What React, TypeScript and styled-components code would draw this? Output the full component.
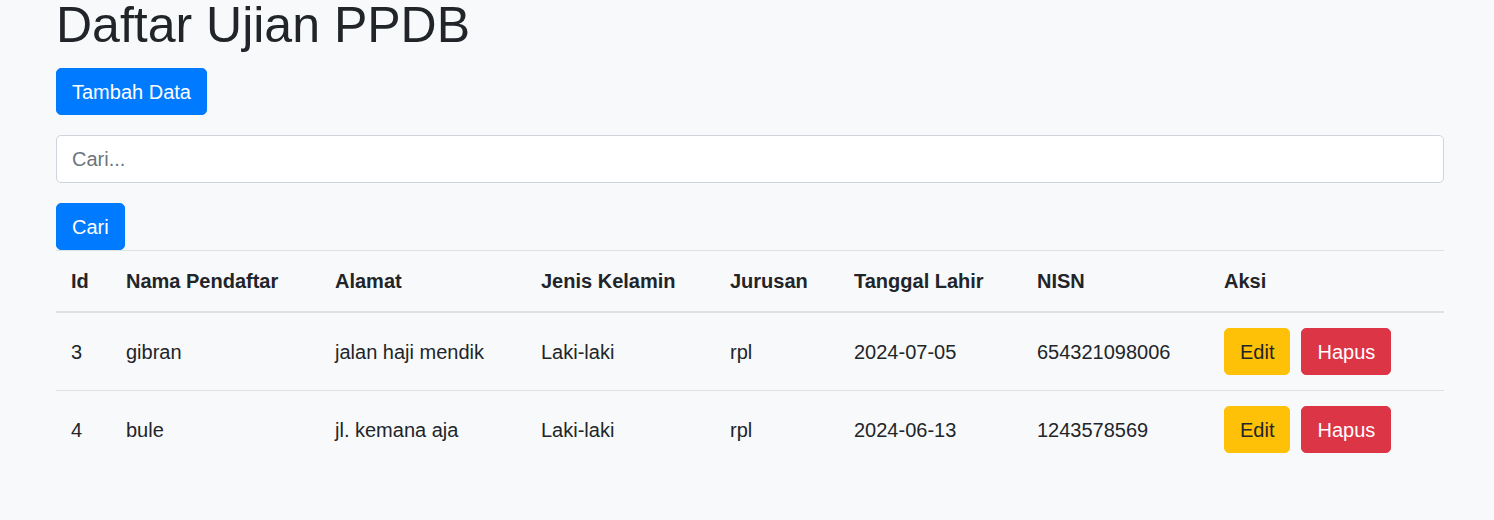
import React from 'react'
import styled, { createGlobalStyle } from 'styled-components'

const GlobalStyle = createGlobalStyle`
  * {
    box-sizing: border-box;
  }
  body {
    margin: 0;
    background-color: #f8f9fa;
    color: #212529;
    font-family: 'Liberation Sans', Arial, sans-serif;
    font-size: 20px;
    line-height: 1.5;
  }
`

const Page = styled.div`
  padding: 0 50px 40px 56px;
`

const Title = styled.h1`
  font-size: 50px;
  font-weight: 500;
  line-height: 1.2;
  margin: -5px 0 13px 0;
`

type Variant = 'primary' | 'warning' | 'danger'

const colors: Record<Variant, { bg: string; fg: string }> = {
  primary: { bg: '#007bff', fg: '#ffffff' },
  warning: { bg: '#ffc107', fg: '#212529' },
  danger: { bg: '#dc3545', fg: '#ffffff' }
}

const Button = styled.button<{ $variant: Variant }>`
  display: inline-block;
  font-family: inherit;
  font-size: 20px;
  line-height: 1.5;
  font-weight: 400;
  padding: 7.5px 15px;
  border: 1px solid ${(p) => colors[p.$variant].bg};
  border-radius: 5px;
  background-color: ${(p) => colors[p.$variant].bg};
  color: ${(p) => colors[p.$variant].fg};
  cursor: pointer;
`

const Block = styled.div`
  margin-bottom: 20px;
`

const SearchInput = styled.input`
  display: block;
  width: 100%;
  height: 48px;
  padding: 7.5px 15px;
  font-family: inherit;
  font-size: 20px;
  line-height: 1.5;
  color: #495057;
  background-color: #ffffff;
  border: 1px solid #ced4da;
  border-radius: 5px;
  &::placeholder {
    color: #6c757d;
  }
`

const Table = styled.table`
  width: 100%;
  border-collapse: collapse;
  table-layout: fixed;
`

const Th = styled.th`
  text-align: left;
  font-weight: 700;
  padding: 15px;
  border-top: 1px solid #dee2e6;
  border-bottom: 2px solid #dee2e6;
  vertical-align: bottom;
`

const Td = styled.td`
  padding: 15px;
  border-top: 1px solid #dee2e6;
  vertical-align: middle;
`

const Actions = styled.div`
  display: flex;
  gap: 11px;
`

const columns = [
  { label: 'Id', width: 55 },
  { label: 'Nama Pendaftar', width: 209 },
  { label: 'Alamat', width: 206 },
  { label: 'Jenis Kelamin', width: 189 },
  { label: 'Jurusan', width: 124 },
  { label: 'Tanggal Lahir', width: 183 },
  { label: 'NISN', width: 187 },
  { label: 'Aksi', width: 235 }
]

const rows = [
  ['3', 'gibran', 'jalan haji mendik', 'Laki-laki', 'rpl', '2024-07-05', '654321098006'],
  ['4', 'bule', 'jl. kemana aja', 'Laki-laki', 'rpl', '2024-06-13', '1243578569']
]

export default function App() {
  return (
    <>
      <GlobalStyle />
      <Page>
        <Title>Daftar Ujian PPDB</Title>
        <Block>
          <Button $variant='primary'>Tambah Data</Button>
        </Block>
        <Block>
          <SearchInput placeholder='Cari...' />
        </Block>
        <Button $variant='primary'>Cari</Button>
        <Table>
          <colgroup>
            {columns.map((c) => (
              <col key={c.label} style={{ width: c.width }} />
            ))}
          </colgroup>
          <thead>
            <tr>
              {columns.map((c) => (
                <Th key={c.label}>{c.label}</Th>
              ))}
            </tr>
          </thead>
          <tbody>
            {rows.map((r) => (
              <tr key={r[0]}>
                {r.map((v, i) => (
                  <Td key={i}>{v}</Td>
                ))}
                <Td>
                  <Actions>
                    <Button $variant='warning'>Edit</Button>
                    <Button $variant='danger'>Hapus</Button>
                  </Actions>
                </Td>
              </tr>
            ))}
          </tbody>
        </Table>
      </Page>
    </>
  )
}
